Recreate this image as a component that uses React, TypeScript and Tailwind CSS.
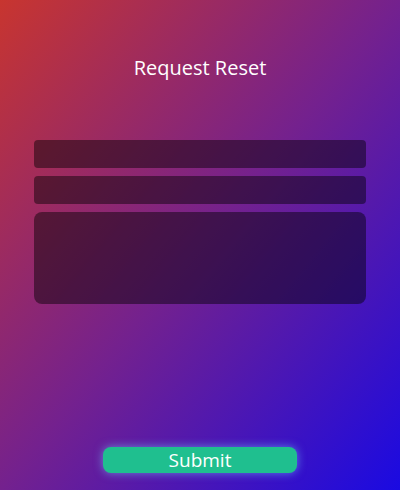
import React from 'react';

export default function App() {
    return (
        <div
            className="w-[400px] h-[490px] flex flex-col items-center bg-[linear-gradient(to_bottom_right,#c8352f,#74218e_50%,#1a0ae2)] text-white"
            style={{ fontFamily: '"Open Sans", "Noto Sans", sans-serif' }}
        >
            <h1 className="mt-[54px] text-[20px] leading-[28px] font-normal">Request Reset</h1>

            <form className="mt-[58px] w-[332px] flex flex-col gap-2">
                <input type="text" className="h-[28px] rounded-[4px] bg-black/45 outline-none px-2" />
                <input type="email" className="h-[28px] rounded-[4px] bg-black/45 outline-none px-2" />
                <textarea className="block h-[92px] rounded-[8px] bg-black/45 outline-none p-2 resize-none" />
            </form>

            <button
                type="button"
                className="mt-auto mb-[17px] w-[194px] h-[26px] rounded-[8px] bg-[#1fbf8f] text-[19px] leading-[26px] text-white shadow-[0_0_10px_rgba(120,220,255,0.55)]"
            >
                Submit
            </button>
        </div>
    );
}
